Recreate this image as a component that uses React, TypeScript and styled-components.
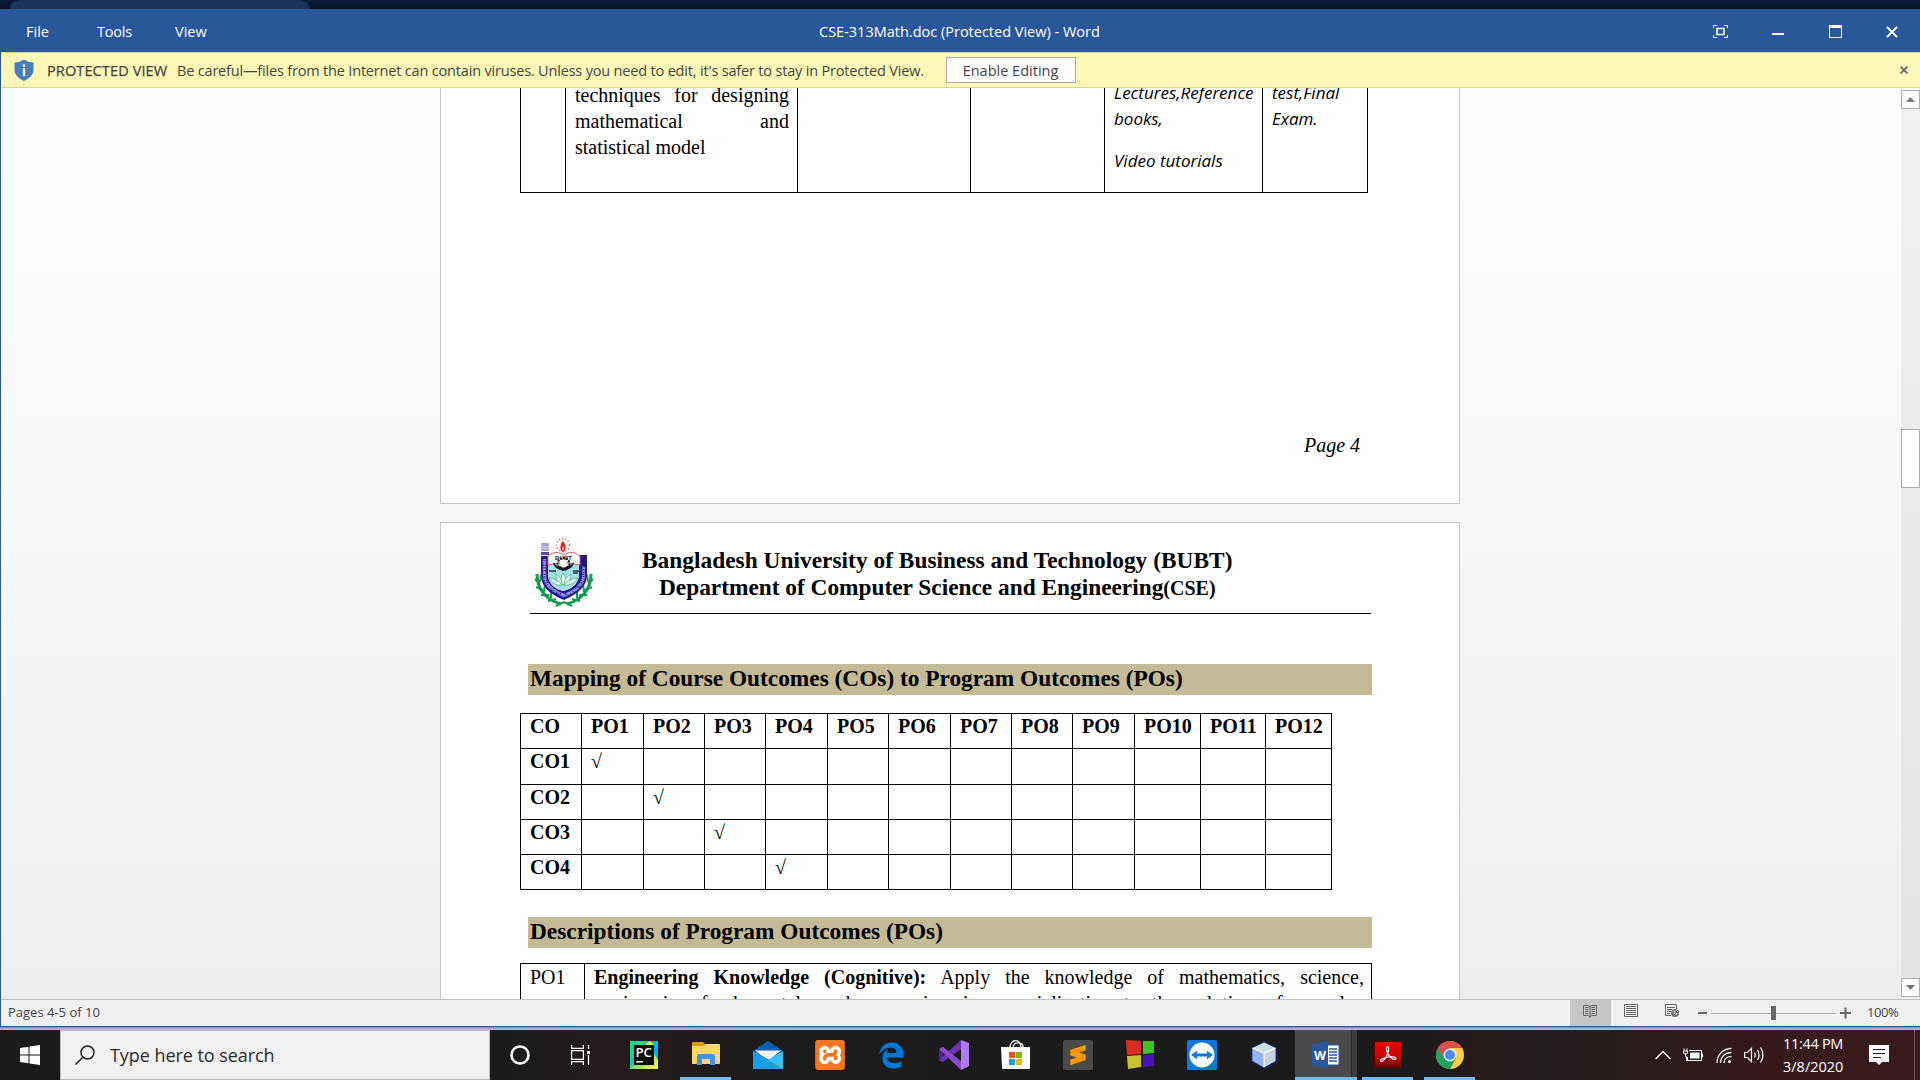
import React from "react";
import styled, { createGlobalStyle, css } from "styled-components";
import { FaEdgeLegacy } from "react-icons/fa6";
import { SiXampp, SiSublimetext } from "react-icons/si";

const ui = '"Open Sans", "Noto Sans", sans-serif';
const serif = '"Liberation Serif", serif';

const Global = createGlobalStyle`
  * { box-sizing: border-box; }
  body { margin: 0; overflow: hidden; background: #081a33; }
  svg { display: block; flex: none; }
`;

const Screen = styled.div`
  width: 1920px;
  height: 1080px;
  display: flex;
  flex-direction: column;
  overflow: hidden;
  background: linear-gradient(#0a1c36, #06152b 9px, #06152b);
  font-family: ${ui};
`;

const BackStrip = styled.div`
  height: 9px;
  padding-left: 10px;
`;
const BackTab = styled.div`
  width: 300px;
  height: 9px;
  border-radius: 9px 9px 0 0;
  background: #19355c;
`;

const Window = styled.main`
  height: 1018px;
  display: flex;
  flex-direction: column;
  border-left: 1px solid #2a579a;
  border-bottom: 1px solid #2a579a;
  background: #f0f0f0;
`;

const TitleBar = styled.header`
  height: 43px;
  flex: none;
  display: flex;
  align-items: center;
  background: #2a579a;
  color: #fff;
  font-size: 14.5px;
  line-height: 34px;
  margin-left: -1px;
`;
const Run = styled.span<{ $ls?: number }>`
  display: inline-block;
  white-space: pre;
  letter-spacing: ${(p) => p.$ls ?? 0}px;
`;
const Menu = styled.nav`
  width: 819px;
  display: flex;
  padding: 2px 0 0 26px;
`;
const MenuItem = styled.div<{ $w: number }>`
  width: ${(p) => p.$w}px;
`;
const DocTitle = styled.div`
  flex: 1;
  padding-top: 2px;
`;
const Controls = styled.div`
  display: flex;
  align-items: center;
  gap: 44.5px;
  padding: 2px 22px 0 0;
`;

const InfoBar = styled.section`
  height: 36px;
  flex: none;
  display: flex;
  align-items: center;
  border-top: 1px solid #d8d78c;
  border-bottom: 1px solid #d8d78c;
  background: #fcf7b6;
  color: #444;
  font-size: 14.5px;
  line-height: 32px;
  padding: 0 12px 0 13px;
`;
const InfoLabel = styled.div`
  width: 130px;
  margin-left: 13px;
  padding-top: 2px;
  -webkit-text-stroke: 0.25px #444;
`;
const InfoText = styled.div`
  width: 769px;
  padding-top: 2px;
`;
const EnableButton = styled.button`
  width: 130px;
  height: 26px;
  padding: 1px 1px 0 0;
  border: 1px solid #ababab;
  background: #fdfdfd;
  color: #444;
  font: 14.5px/22px ${ui};
  margin-right: auto;
`;

const Workspace = styled.div`
  height: 911px;
  flex: none;
  display: flex;
  background: linear-gradient(#fdfdfd, #f7f7f7 48%, #eeeeee);
`;
const Canvas = styled.div`
  flex: 1;
  overflow: hidden;
  padding-left: 439px;
`;
const Page = styled.article<{ $h: number; $first?: boolean }>`
  width: 1020px;
  height: ${(p) => p.$h}px;
  border: 1px solid #c6c6c6;
  ${(p) => p.$first && css`border-top: 0; margin-bottom: 18px;`}
  background: #fff;
  color: #000;
  font-family: ${serif};
  font-size: 20px;
  line-height: 26px;
  overflow: hidden;
`;

const OutcomeRow = styled.div`
  display: grid;
  grid-template-columns: 45px 232px 173px 134px 158px 106px;
  width: 848px;
  height: 105px;
  margin-left: 79px;
  border-bottom: 1px solid #000;
`;
const OutcomeCell = styled.div`
  border-left: 1px solid #000;
  padding-left: 9px;
  overflow: hidden;
  &:last-child { border-right: 1px solid #000; }
`;
const Technique = styled.p`
  margin: -6px 0 0;
  width: 214px;
  text-align: justify;
`;
const Resource = styled.p<{ $gap?: number }>`
  margin: ${(p) => p.$gap ?? 0}px 0 0;
  font: italic 17px/26px ${ui};
  white-space: nowrap;
`;
const PageFooter = styled.div`
  padding: 239px 0 0 863px;
  font-style: italic;
`;

const Letterhead = styled.div`
  width: 841px;
  height: 91px;
  margin-left: 89px;
  border-bottom: 1px solid #000;
  display: flex;
  font-weight: bold;
  font-size: 23.33px;
  line-height: 27px;
`;
const Seal = styled.div`
  padding: 14px 0 0 4px;
  width: 112px;
`;
const LetterLines = styled.div`
  padding-top: 24px;
`;
const LetterLine = styled.div<{ $x?: number }>`
  padding-left: ${(p) => p.$x ?? 0}px;
  white-space: nowrap;
  small { font-size: 20px; }
`;
const Heading = styled.h2<{ $top: number }>`
  width: 844px;
  height: 31px;
  margin: ${(p) => p.$top}px 0 0 87px;
  padding-left: 2px;
  background: #c4bb96;
  font: bold 23.33px/29px ${serif};
`;

const MapTable = styled.div`
  margin: 18px 0 0 79px;
  width: 812px;
  border: solid #000;
  border-width: 0 1px 1px 0;
`;
const MapRow = styled.div<{ $h: number }>`
  display: grid;
  grid-template-columns: 61px 62px 61px 61px 62px 61px 62px 61px 61px 62px 66px 65px 66px;
  height: ${(p) => p.$h}px;
`;
const MapCell = styled.div<{ $bold?: boolean }>`
  border: solid #000;
  border-width: 1px 0 0 1px;
  padding-left: 9px;
  line-height: 25px;
  font-weight: ${(p) => (p.$bold ? "bold" : "normal")};
`;

const DescTable = styled.div`
  display: grid;
  grid-template-columns: 64px 788px;
  width: 852px;
  height: 80px;
  margin: 15px 0 0 79px;
  border-top: 1px solid #000;
`;
const DescCell = styled.div`
  border-left: 1px solid #000;
  padding: 0 7px 0 9px;
  text-align: justify;
  &:last-child { border-right: 1px solid #000; }
`;

const ScrollTrack = styled.div`
  width: 19px;
  margin: 2px 0;
  display: flex;
  flex-direction: column;
  align-items: stretch;
  background: linear-gradient(#f1f1f1, #e3e3e3);
`;
const ScrollButton = styled.div`
  height: 19px;
  border: 1px solid #ababab;
  background: #fff;
  display: grid;
  place-items: center;
`;
const ScrollThumb = styled.div`
  height: 59px;
  margin: 320px 0 auto;
  border: 1px solid #ababab;
  background: #fff;
`;

const StatusBar = styled.footer`
  height: 27px;
  flex: none;
  display: flex;
  align-items: center;
  border-top: 1px solid #bfbfbf;
  background: #f0f0f0;
  color: #444;
  font-size: 13px;
  line-height: 24px;
  padding-left: 7px;
`;
const StatusText = styled.div`
  flex: 1;
  padding-bottom: 2px;
`;
const ViewButton = styled.div<{ $on?: boolean }>`
  width: 41px;
  height: 26px;
  display: grid;
  place-items: center;
  padding: 0 2px 4px 0;
  background: ${(p) => (p.$on ? "#c6c6c6" : "transparent")};
`;
const Zoom = styled.div`
  width: 174px;
  padding-left: 5px;
`;
const ZoomText = styled.div`
  width: 53px;
  padding-bottom: 2px;
`;

const WindowShadow = styled.div`
  height: 3px;
  background: linear-gradient(#8e8e8e, #c4c4c4);
`;
const Taskbar = styled.div`
  height: 50px;
  display: flex;
  background: linear-gradient(90deg, #1b1b1b 0, #1b1b1b 490px, #261b1c 620px, #1d1b1b 760px, #1b1b1b 1420px, #271a1b 1480px, #231c1c 1540px, #351a1c 1760px, #391b1d);
`;
const Start = styled.div`
  width: 60px;
  display: grid;
  place-items: center;
`;
const Search = styled.div`
  width: 430px;
  height: 50px;
  display: flex;
  align-items: center;
  border: 1px solid #b9b9b9;
  background: #f1f1f1;
  color: #2b2b2b;
  font-size: 18px;
  padding-left: 14px;
  gap: 15px;
`;
const Apps = styled.div`
  display: flex;
  flex: 1;
`;
const TaskItem = styled.div<{ $run?: boolean; $active?: boolean; $w?: number; $gap?: number }>`
  width: ${(p) => p.$w ?? 62}px;
  margin-right: ${(p) => p.$gap ?? 0}px;
  height: 50px;
  display: grid;
  place-items: center;
  border: solid transparent;
  border-width: 0 6px 0 5px;
  background-clip: padding-box;
  ${(p) => p.$run && css`
    background-image: linear-gradient(#76b9ed, #76b9ed);
    background-size: 100% 3px;
    background-position: bottom;
    background-repeat: no-repeat;
  `}
  ${(p) => p.$active && css`
    border: 0;
    padding-right: 1px;
    background-image: linear-gradient(#76b9ed, #76b9ed), linear-gradient(90deg, #4a4a4a 56px, #262626 56px, #262626 57px, #3d3d3d 57px);
    background-size: 100% 3px, 100% 100%;
    background-position: bottom, top;
    background-repeat: no-repeat;
  `}
`;
const Tray = styled.div`
  display: flex;
  align-items: center;
  color: #fff;
`;
const TrayIcons = styled.div`
  display: flex;
  align-items: center;
  gap: 12px;
  padding-right: 1px;
`;
const Clock = styled.div`
  width: 103px;
  padding-left: 17px;
  font-size: 14.5px;
  line-height: 23px;
`;
const ShowDesktop = styled.div`
  width: 6px;
  height: 50px;
  margin-left: 25px;
  border-left: 1px solid #6e5c5d;
`;

function Shield() {
  return (
    <svg width="20" height="22" viewBox="0 0 20 22">
      <path d="M10 0.5C7 2.6 4 3.5 0.5 3.5V11C0.5 16 5 19.8 10 22C15 19.8 19.5 16 19.5 11V3.5C16 3.5 13 2.6 10 0.5Z" fill="#4a7ebb" />
      <path d="M8.900 5.500h2.200v2.200H8.900zM8.900 9h2.200v8H8.900z" fill="#fff" />
    </svg>
  );
}

function SealArt() {
  return (
    <svg width="60" height="70" viewBox="0 0 60 70">
      <g fill="none" stroke="#139a4a" strokeWidth="3">
        <path d="M3 37C3 52 12 63 27 67" />
        <path d="M57 37C57 52 48 63 33 67" />
      </g>
      <g fill="none" stroke="#139a4a" strokeWidth="2">
        <path d="M1 42l5 5M2 50l7 3M7 58l8 0M14 64l8-2M7 38l-1 7M11 47l-1 8M17 54l0 7M59 42l-5 5M58 50l-7 3M53 58l-8 0M46 64l-8-2M53 38l1 7M49 47l1 8M43 54l0 7M22 69l8-4l8 4" />
      </g>
      <g fill="#8d86c4">
        <path d="M7 6h8v3H7zM7 9.500h8v2H7zM7 12h8v2H7z" opacity=".75" />
        <path d="M7 15h8v3H7z" fill="#5548a8" />
      </g>
      <path d="M7 19H14V37C14 46 20 52 29 54C39 52 45 46 45 37V18H53V38C53 51 41 58 30 63C18 58 7 51 7 38Z" fill="#20178c" />
      <path d="M14 20H45V37C45 46 38 51 29.500 54C20 51 14 46 14 37Z" fill="#a5e0f1" />
      <path d="M14 19C20 14 25 15 30 18C35 14 40 15 46 19V28L30 25L14 28Z" fill="#fff" stroke="#e0585c" strokeWidth="1" />
      <path d="M19 25C20 36 39 36 40 25L36 29H23Z" fill="#151515" />
      <circle cx="29.500" cy="27" r="6" fill="none" stroke="#151515" strokeWidth="2" strokeDasharray="2 1" />
      <circle cx="29.500" cy="27" r="3.500" fill="#fff" />
      <text x="21" y="23" fontFamily="Liberation Sans, sans-serif" fontWeight="700" fontSize="6" fill="#222" textLength="17">BUBT</text>
      <path d="M15 34h7M39 34h6M39 36h5" stroke="#333" strokeWidth="1.500" />
      <g fill="#e8fbf2" stroke="#3fae78" strokeWidth=".8">
        <path d="M29 36C26 41 27 46 29 48C32 46 33 41 29 36Z" />
        <path d="M22 37C22 43 25 47 28 48C28 43 26 39 22 37ZM37 37C37 43 34 47 30 48C30 43 33 39 37 37Z" />
        <path d="M15 41C18 46 23 49 28 48C25 44 20 41 15 41ZM44 41C41 46 36 49 30 48C33 44 39 41 44 41Z" />
      </g>
      <path id="rim" d="M9 22V38C9 49 19 56 30 60C41 56 51 49 51 38V20" fill="none" />
      <text fontFamily="Liberation Sans, sans-serif" fontWeight="700" fontSize="4.400" fill="#bdb8ea">
        <textPath href="#rim" textLength="90">BANGLADESH UNIVERSITY OF BUSINESS &amp; TECHNOLOGY</textPath>
      </text>
      <path d="M29 4C25 8 26 14 29 15C32 14 33 9 29 4ZM29 9C30 11 30 13 29 13C28 13 28 11 29 9Z" fill="#e8201c" fillRule="evenodd" />
      <circle cx="29" cy="8" r="6.500" fill="none" stroke="#ee5a56" strokeWidth="1.500" strokeDasharray="1.200 2" />
    </svg>
  );
}

function Icons({ kind }: { kind: string }) {
  switch (kind) {
    case "pycharm":
      return (
        <svg width="28" height="28" viewBox="0 0 28 28">
          <defs>
            <linearGradient id="pc" x1="0" y1="0" x2="1" y2="1">
              <stop offset="0" stopColor="#21d789" /><stop offset=".45" stopColor="#1fc8a0" />
              <stop offset=".55" stopColor="#9be05a" /><stop offset="1" stopColor="#fcf84a" />
            </linearGradient>
          </defs>
          <path d="M0 0H28V28H0Z" fill="url(#pc)" />
          <path d="M20 0H28V20L24 12Z" fill="#07b6e8" />
          <path d="M15 4L20 0L24 4Z" fill="#fcf84a" />
          <path d="M4 4H24V24H4Z" fill="#0b0b0b" />
          <text x="5.500" y="15.500" fontFamily="Open Sans, sans-serif" fontWeight="600" fontSize="12" fill="#fff" textLength="16.500" lengthAdjust="spacingAndGlyphs">PC</text>
          <path d="M6 20h7v1.500H6z" fill="#fff" />
        </svg>
      );
    case "explorer":
      return (
        <svg width="28" height="26" viewBox="0 0 28 26">
          <path d="M0 3V1Q0 0 1 0H11L14 3V8H0Z" fill="#dc9c07" />
          <path d="M0 4H11L14 2H27Q28 2 28 3V21Q28 22 27 22H1Q0 22 0 21Z" fill="#ffd667" />
          <path d="M5 23V14Q5 12 7 12H21Q23 12 23 14V23H18V17H10V23Z" fill="#3f97d8" />
        </svg>
      );
    case "mail":
      return (
        <svg width="30" height="28" viewBox="0 0 30 28">
          <path d="M0 10L15 0L30 10L15 20Z" fill="#0a5fb4" />
          <path d="M2 9.500H28L15 20Z" fill="#f2f2f2" />
          <path d="M0 10L15 18L30 28H0Z" fill="#1c93e3" />
          <path d="M30 10L0 28H30Z" fill="#35c1f5" />
          <path d="M0 10L30 28H0Z" fill="#1b9de8" />
        </svg>
      );
    case "store":
      return (
        <svg width="30" height="30" viewBox="0 0 30 30">
          <path d="M9 8C9 -2 20 -2 20 8M12 8C12 1 23 1 22 8" fill="none" stroke="#ddd" strokeWidth="1.500" />
          <path d="M0 7H29V28Q29 29 28 29H2Q1 29 1 28Z" fill="#fff" />
          <path d="M8 12h6v6H8z" fill="#f25022" /><path d="M15 12h6v6h-6z" fill="#7fba00" />
          <path d="M8 19h6v6H8z" fill="#00a4ef" /><path d="M15 19h6v6h-6z" fill="#ffb900" />
        </svg>
      );
    case "vs":
      return (
        <svg width="30" height="30" viewBox="0 0 30 30">
          <path d="M0 9L4 7V22L0 20Z" fill="#52218a" />
          <path d="M0 20L22 0V9L4 22Z" fill="#6c33af" />
          <path d="M0 9L4 7L22 21V30Z" fill="#854cc7" />
          <path d="M22 0L30 3V26L22 30Z" fill="#b179f1" />
        </svg>
      );
    case "blocks":
      return (
        <svg width="28" height="30" viewBox="0 0 28 30">
          <path d="M0 0L15 1V14L1 15Z" fill="#d92c25" /><path d="M17 1H28V13L17 14Z" fill="#3fc51f" />
          <path d="M1 16L15 15V27L2 29Z" fill="#c9c32e" /><path d="M17 15L28 14V26L17 27Z" fill="#4a14b8" />
        </svg>
      );
    case "teamviewer":
      return (
        <svg width="30" height="30" viewBox="0 0 30 30">
          <rect width="30" height="30" rx="1.500" fill="#0c78dc" />
          <circle cx="15" cy="15" r="12.500" fill="#fff" />
          <path d="M4 15L10.500 10.500L9.800 13.500H20.200L19.500 10.500L26 15L19.500 19.500L20.200 16.500H9.800L10.500 19.500Z" fill="#0c78dc" />
        </svg>
      );
    case "cube":
      return (
        <svg width="28" height="28" viewBox="0 0 28 28">
          <path d="M14 1L26 7V20L14 27L2 20V7Z" fill="#8fb2f2" stroke="#20207a" strokeWidth="1.500" />
          <path d="M14 1.500L25.500 7L14 12L2.500 7Z" fill="#c9dfe0" />
          <path d="M14 12L25.500 7V20L14 26.500Z" fill="#c3d2de" />
          <path d="M14 12L2.500 7V20L14 26.500Z" fill="#94b4f5" />
          <path d="M14 12V26M2.500 7L14 12L25.500 7" stroke="#fff" strokeWidth="1.200" fill="none" />
        </svg>
      );
    case "word":
      return (
        <svg width="28" height="28" viewBox="0 0 28 28">
          <path d="M15 4H27V24H15Z" fill="#fff" stroke="#2b579a" strokeWidth="1" />
          <path d="M17 8h8M17 11h8M17 14h8M17 17h8M17 20h8" stroke="#2b579a" strokeWidth="1.500" />
          <path d="M0 3L16 0V28L0 25Z" fill="#2b579a" />
          <text x="2" y="18.500" fontFamily="Open Sans, sans-serif" fontWeight="700" fontSize="12.500" fill="#fff" textLength="12" lengthAdjust="spacingAndGlyphs">W</text>
        </svg>
      );
    case "acrobat":
      return (
        <svg width="28" height="28" viewBox="0 0 28 28">
          <defs><linearGradient id="ac" x1="0" y1="0" x2="0" y2="1"><stop offset="0" stopColor="#f40000" /><stop offset=".5" stopColor="#d00404" /><stop offset="1" stopColor="#6c0202" /></linearGradient></defs>
          <path d="M.5 .5H27.500V26.500H.5Z" fill="url(#ac)" stroke="#5a0303" />
          <path d="M13 6C15 4.500 15 9 13.500 13C12 17 9 21 7 20.500C5 19 9 17 14 16C18 15 22 16 22 17.500C21 20 16 17 14 13C12.500 10 12 7 13 6Z" fill="none" stroke="#fff" strokeWidth="1.200" />
        </svg>
      );
    default:
      return (
        <svg width="28" height="28" viewBox="-14 -14 28 28">
          <circle r="14" fill="#dd5144" />
          <path d="M0 0L-12.100 -7A14 14 0 0 0 0 14L6.100 3.500Z" fill="#1da462" />
          <path d="M0 -7H12.100A14 14 0 0 1 0 14L6.100 3.500Z" fill="#ffcd46" />
          <path d="M0 -7H12.100A14 14 0 0 0 -12.100 -7L-6.100 3.500Z" fill="#dd5144" />
          <circle r="6.500" fill="#f1f1f1" /><circle r="5" fill="#4a8af4" />
        </svg>
      );
  }
}

const marks = ["CO1", "CO2", "CO3", "CO4"];
const rowHeights = [36, 35, 35, 35];
const programs = Array.from({ length: 12 }, (_, i) => `PO${i + 1}`);

export default function App() {
  return (
    <Screen>
      <Global />
      <BackStrip><BackTab /></BackStrip>
      <Window>
        <TitleBar>
          <Menu>
            <MenuItem $w={71}><Run>File</Run></MenuItem>
            <MenuItem $w={78}><Run $ls={-0.2}>Tools</Run></MenuItem>
            <MenuItem $w={60}><Run>View</Run></MenuItem>
          </Menu>
          <DocTitle><Run>CSE-313Math.doc (Protected View) - Word</Run></DocTitle>
          <Controls>
            <svg width="15" height="13" viewBox="0 0 15 13" fill="none" stroke="#fff"><path d="M.5 3V.5H4M11 .5H14.500V3M14.500 10V12.500H11M4 12.500H.5V10" /><path d="M4 3.500H11V9.500H4Z" strokeWidth="1.600" /></svg>
            <svg width="12" height="13" viewBox="0 0 12 13"><path d="M0 8h12v2H0z" fill="#fff" /></svg>
            <svg width="13" height="13" viewBox="0 0 13 13"><path d="M0 0H13V13H0ZM1 3V12H12V3Z" fill="#fff" fillRule="evenodd" /></svg>
            <svg width="12" height="12" viewBox="0 0 12 12"><path d="M1 1L11 11M11 1L1 11" stroke="#fff" strokeWidth="1.800" /></svg>
          </Controls>
        </TitleBar>
        <InfoBar>
          <Shield />
          <InfoLabel><Run $ls={0.12}>PROTECTED VIEW</Run></InfoLabel>
          <InfoText><Run $ls={-0.18}>Be careful—files from the Internet can contain viruses. Unless you need to edit, it's safer to stay in Protected View.</Run></InfoText>
          <EnableButton><Run>Enable Editing</Run></EnableButton>
          <svg width="8" height="8" viewBox="0 0 8 8"><path d="M.5 .5L7.500 7.500M7.500 .5L.5 7.500" stroke="#666" strokeWidth="1.800" /></svg>
        </InfoBar>
        <Workspace>
          <Canvas>
            <Page $h={416} $first>
              <OutcomeRow>
                <OutcomeCell />
                <OutcomeCell>
                  <Technique>techniques for designing mathematical and statistical model</Technique>
                </OutcomeCell>
                <OutcomeCell />
                <OutcomeCell />
                <OutcomeCell>
                  <Resource $gap={-8}>Lectures,Reference</Resource>
                  <Resource>books,</Resource>
                  <Resource $gap={16}>Video tutorials</Resource>
                </OutcomeCell>
                <OutcomeCell>
                  <Resource $gap={-8}>test,Final</Resource>
                  <Resource>Exam.</Resource>
                </OutcomeCell>
              </OutcomeRow>
              <PageFooter>Page 4</PageFooter>
            </Page>
            <Page $h={700}>
              <Letterhead>
                <Seal><SealArt /></Seal>
                <LetterLines>
                  <LetterLine><Run $ls={0.035}>Bangladesh University of Business and Technology (BUBT)</Run></LetterLine>
                  <LetterLine $x={17}>Department of Computer Science and Engineering<small>(CSE)</small></LetterLine>
                </LetterLines>
              </Letterhead>
              <Heading $top={50}>Mapping of Course Outcomes (COs) to Program Outcomes (POs)</Heading>
              <MapTable>
                <MapRow $h={35}>
                  <MapCell $bold>CO</MapCell>
                  {programs.map((po) => <MapCell $bold key={po}>{po}</MapCell>)}
                </MapRow>
                {marks.map((name, r) => (
                  <MapRow $h={rowHeights[r]} key={name}>
                    <MapCell $bold>{name}</MapCell>
                    {programs.map((po, i) => <MapCell key={po}>{i === r ? "√" : ""}</MapCell>)}
                  </MapRow>
                ))}
              </MapTable>
              <Heading $top={27}>Descriptions of Program Outcomes (POs)</Heading>
              <DescTable>
                <DescCell>PO1</DescCell>
                <DescCell>
                  <b>Engineering Knowledge (Cognitive):</b> Apply the knowledge of mathematics, science, engineering fundamentals and an engineering specialization to the solution of complex engineering problems.
                </DescCell>
              </DescTable>
            </Page>
          </Canvas>
          <ScrollTrack>
            <ScrollButton><svg width="9" height="5" viewBox="0 0 9 5"><path d="M4.500 0L9 5H0Z" fill="#777" /></svg></ScrollButton>
            <ScrollThumb />
            <ScrollButton><svg width="9" height="5" viewBox="0 0 9 5"><path d="M0 0H9L4.500 5Z" fill="#777" /></svg></ScrollButton>
          </ScrollTrack>
        </Workspace>
        <StatusBar>
          <StatusText>Pages 4-5 of 10</StatusText>
          <ViewButton $on>
            <svg width="14" height="14" viewBox="0 0 14 14" fill="none" stroke="#666"><path d="M.5 1.500H5L7 2.500L9 1.500H13.500V11.500H9L7 12.500L5 11.500H.5ZM7 2.500V14M2 3.500H5.500M2 5.500H5.500M2 7.500H5.500M2 9.500H5.500M8.500 3.500H12M8.500 5.500H12M8.500 7.500H12M8.500 9.500H12" /></svg>
          </ViewButton>
          <ViewButton>
            <svg width="14" height="14" viewBox="0 0 14 14" fill="none" stroke="#666"><path d="M.5 .5H13.500V12.500H.5ZM2 2.500H12M2 4.500H12M2 6.500H12M2 8.500H12M2 10.500H12" /></svg>
          </ViewButton>
          <ViewButton>
            <svg width="14" height="14" viewBox="0 0 14 14" fill="none" stroke="#666"><path d="M6 11.500H.5V.5H11.500V5M2 3.500H10M2 5.500H7M2 7.500H6M2 9.500H5" /><circle cx="10" cy="9" r="4" fill="#777" stroke="none" /><path d="M8 7l2 1l-1 2M11 6l2 2M11 11l1-2" stroke="#ddd" /></svg>
          </ViewButton>
          <Zoom>
            <svg width="154" height="16" viewBox="0 0 154 16"><path d="M0 7h9v2H0zM142 7h11v2h-11zM146.500 2.500h2v11h-2zM73 1h5v14h-5z" fill="#666" /><path d="M13 8.500H73M78 8.500H138" stroke="#ababab" /></svg>
          </Zoom>
          <ZoomText><Run $ls={-0.4}>100%</Run></ZoomText>
        </StatusBar>
      </Window>
      <WindowShadow />
      <Taskbar>
        <Start>
          <svg width="20" height="20" viewBox="0 0 20 20" fill="#fff"><path d="M0 3L8.500 1.800V9.500H0ZM9.500 1.600L20 0V9.500H9.500ZM0 10.500H8.500V18.200L0 17ZM9.500 10.500H20V20L9.500 18.400Z" /></svg>
        </Start>
        <Search>
          <svg width="20" height="20" viewBox="0 0 20 20" fill="none" stroke="#222" strokeWidth="1.500"><circle cx="12.500" cy="7.500" r="6.500" /><path d="M8 12L.5 19.500" /></svg>
          <Run $ls={-0.06}>Type here to search</Run>
        </Search>
        <Apps>
          <TaskItem $w={60}><svg width="20" height="20" viewBox="0 0 20 20"><circle cx="10" cy="10" r="8.500" fill="none" stroke="#fff" strokeWidth="2.500" /></svg></TaskItem>
          <TaskItem $gap={1}><svg width="20" height="20" viewBox="0 0 20 20" fill="none" stroke="#fff" strokeWidth="1.200"><path d="M.6 0V3.400H12.400V0M.6 20V16.600H12.400V20M.6 5.600H12.400V14.400H.6ZM17.500 0V4M17.500 10V20" /><path d="M16 6h3v3h-3z" fill="#fff" stroke="none" /></svg></TaskItem>
          <TaskItem><Icons kind="pycharm" /></TaskItem>
          <TaskItem $run><Icons kind="explorer" /></TaskItem>
          <TaskItem><Icons kind="mail" /></TaskItem>
          <TaskItem><svg width="30" height="30" viewBox="0 0 30 30"><rect x="1" y="1" width="28" height="28" rx="3" fill="#fff" /><SiXampp size={30} color="#f37623" /></svg></TaskItem>
          <TaskItem><FaEdgeLegacy size={27} color="#0078d7" /></TaskItem>
          <TaskItem><Icons kind="vs" /></TaskItem>
          <TaskItem><Icons kind="store" /></TaskItem>
          <TaskItem><svg width="30" height="30" viewBox="0 0 30 30"><rect width="30" height="30" rx="2" fill="#4a4a4a" /><SiSublimetext x={5} y={5} size={20} color="#ff9800" /></svg></TaskItem>
          <TaskItem><Icons kind="blocks" /></TaskItem>
          <TaskItem><Icons kind="teamviewer" /></TaskItem>
          <TaskItem><Icons kind="cube" /></TaskItem>
          <TaskItem $active><Icons kind="word" /></TaskItem>
          <TaskItem $run><Icons kind="acrobat" /></TaskItem>
          <TaskItem $run><Icons kind="chrome" /></TaskItem>
        </Apps>
        <Tray>
          <TrayIcons>
            <svg width="16" height="10" viewBox="0 0 16 10"><path d="M.7 9L8 1.500L15.300 9" fill="none" stroke="#fff" strokeWidth="1.400" /></svg>
            <svg width="21" height="14" viewBox="0 0 21 14" fill="none" stroke="#fff"><path d="M6 2.500H18.500V12.500H4.500V9M19.500 5.500V9.500M2.500 5V8.500H3.500V13" /><path d="M1 .5V3M4 .5V3M.5 3H4.500V5L3.500 6H1.500L.5 5Z" /><path d="M7 4.500H16.500V10.500H7Z" fill="#fff" stroke="none" /></svg>
            <svg width="16" height="17" viewBox="0 0 16 17" fill="none" stroke="#fff" strokeWidth="1.300"><path d="M1 16C1 8 7 1.500 15.500 1.500M4.500 16C4.500 10 9 5.500 15.500 5.500M8 16C8 12 11 9.500 15.500 9.500" opacity=".85" /><circle cx="13.500" cy="14.500" r="1.500" fill="#fff" stroke="none" /></svg>
            <svg width="21" height="18" viewBox="0 0 21 18" fill="none" stroke="#fff" strokeWidth="1.200"><path d="M.6 6.500H3.500L7.500 2.500V15.500L3.500 11.500H.6ZM10.500 6.500Q12 9 10.500 11.500M13.500 4Q16.500 9 13.500 14M16.500 1.500Q21.500 9 16.500 16.500" /></svg>
          </TrayIcons>
          <Clock><Run $ls={-0.3}>11:44 PM</Run><br /><Run>3/8/2020</Run></Clock>
          <svg width="20" height="20" viewBox="0 0 20 20"><path d="M0 0H20V17H13L10 20L7 17H0Z" fill="#fff" /><path d="M4 4.500h12M4 8.500h12M4 12.500h8" stroke="#351a1c" strokeWidth="1.200" /></svg>
          <ShowDesktop />
        </Tray>
      </Taskbar>
    </Screen>
  );
}
